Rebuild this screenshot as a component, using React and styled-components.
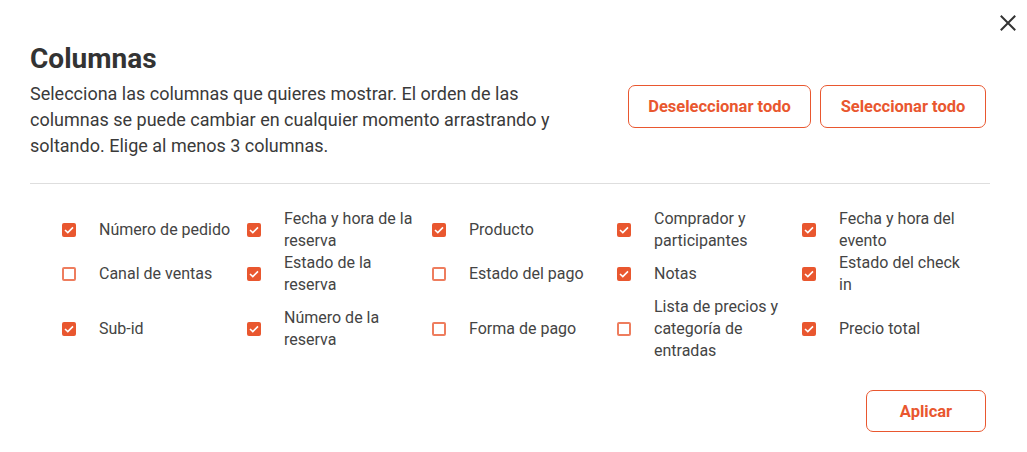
import { useState } from "react";
import styled, { createGlobalStyle } from "styled-components";

const ORANGE = "#e9572f";

const columns = [
  { label: "Número de pedido", checked: true },
  { label: "Fecha y hora de la reserva", checked: true },
  { label: "Producto", checked: true },
  { label: "Comprador y participantes", checked: true },
  { label: "Fecha y hora del evento", checked: true },
  { label: "Canal de ventas", checked: false },
  { label: "Estado de la reserva", checked: true },
  { label: "Estado del pago", checked: false },
  { label: "Notas", checked: true },
  { label: "Estado del check in", checked: true },
  { label: "Sub-id", checked: true },
  { label: "Número de la reserva", checked: true },
  { label: "Forma de pago", checked: false },
  { label: "Lista de precios y categoría de entradas", checked: false },
  { label: "Precio total", checked: true },
];

function App() {
  const [items, setItems] = useState(columns);

  const toggle = (index) => {
    setItems(items.map((it, i) => (i === index ? { ...it, checked: !it.checked } : it)));
  };

  const setAll = (value) => setItems(items.map((it) => ({ ...it, checked: value })));

  return (
    <>
      <GlobalStyle />
      <Modal>
        <CloseButton aria-label="Cerrar">
          <svg width="16" height="16" viewBox="0 0 16 16">
            <path d="M1.5 1.5 L14.5 14.5 M14.5 1.5 L1.5 14.5" stroke="#333" strokeWidth="2" strokeLinecap="square" />
          </svg>
        </CloseButton>

        <Title>Columnas</Title>
        <HeaderRow>
          <Description>
            Selecciona las columnas que quieres mostrar. El orden de las columnas se puede cambiar en
            cualquier momento arrastrando y soltando. Elige al menos 3 columnas.
          </Description>
          <Actions>
            <OutlineButton $width={183} $height={43} onClick={() => setAll(false)}>
              Deseleccionar todo
            </OutlineButton>
            <OutlineButton $width={166} $height={43} onClick={() => setAll(true)}>
              Seleccionar todo
            </OutlineButton>
          </Actions>
        </HeaderRow>

        <Divider />

        <Grid>
          {items.map((item, index) => (
            <Option key={item.label} onClick={() => toggle(index)}>
              <Box $checked={item.checked}>
                {item.checked && (
                  <svg width="10" height="8" viewBox="0 0 10 8">
                    <path d="M1 4 L3.8 6.6 L9 1.4" stroke="#fff" strokeWidth="1.6" fill="none" />
                  </svg>
                )}
              </Box>
              <Label>{item.label}</Label>
            </Option>
          ))}
        </Grid>

        <Footer>
          <OutlineButton $width={120} $height={42}>Aplicar</OutlineButton>
        </Footer>
      </Modal>
    </>
  );
}

// Styles
const GlobalStyle = createGlobalStyle`
  body {
    margin: 0;
    background: #fff;
    font-family: Roboto, "Liberation Sans", sans-serif;
  }
`;

const Modal = styled.div`
  position: relative;
  width: 1027px;
  height: 452px;
  box-sizing: border-box;
  padding: 42px 37px 0 30px;
  background: #fff;
`;

const CloseButton = styled.button`
  position: absolute;
  top: 15px;
  right: 11px;
  padding: 0;
  border: none;
  background: transparent;
  cursor: pointer;
  display: flex;
`;

const Title = styled.h2`
  margin: 0;
  font-size: 28px;
  line-height: 33px;
  font-weight: 700;
  color: #333;
`;

const HeaderRow = styled.div`
  display: flex;
  justify-content: space-between;
  align-items: flex-start;
  margin-top: 6px;
  padding-right: 4px;
`;

const Description = styled.p`
  margin: 0;
  width: 545px;
  font-size: 18px;
  line-height: 26px;
  color: #3a3a3a;
`;

const Actions = styled.div`
  display: flex;
  gap: 9px;
  margin-top: 4px;
`;

const OutlineButton = styled.button`
  width: ${(p) => p.$width}px;
  height: ${(p) => p.$height}px;
  box-sizing: border-box;
  border: 1px solid ${ORANGE};
  border-radius: 7px;
  background: #fff;
  color: ${ORANGE};
  font-family: Roboto, "Liberation Sans", sans-serif;
  font-size: 16.5px;
  font-weight: 700;
  cursor: pointer;
`;

const Divider = styled.hr`
  margin: 24px 0 0;
  border: none;
  border-top: 1px solid #dedede;
`;

const Grid = styled.div`
  display: grid;
  grid-template-columns: repeat(5, 185px);
  margin-top: 24px;
  padding-left: 32px;
`;

const Option = styled.label`
  display: flex;
  align-items: center;
  gap: 23px;
  cursor: pointer;
`;

const Box = styled.span`
  flex: none;
  width: 14px;
  height: 14px;
  box-sizing: border-box;
  border-radius: 2px;
  border: 2px solid ${(p) => (p.$checked ? ORANGE : "#ee7d5e")};
  background: ${(p) => (p.$checked ? ORANGE : "#fff")};
  display: flex;
  align-items: center;
  justify-content: center;
`;

const Label = styled.span`
  width: 134px;
  font-size: 16px;
  line-height: 22px;
  color: #444;
`;

const Footer = styled.div`
  display: flex;
  justify-content: flex-end;
  margin-top: 28px;
  padding-right: 4px;
`;

export default App;
